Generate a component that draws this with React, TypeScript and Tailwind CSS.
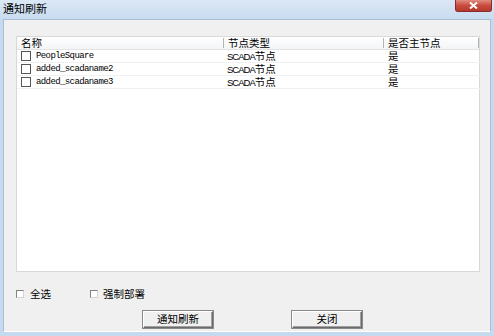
import React from "react";

type Node = {
  name: string;
  type: string;
  master: string;
};

const nodes: Node[] = [
  { name: "PeopleSquare", type: "SCADA", master: "是" },
  { name: "added_scadaname2", type: "SCADA", master: "是" },
  { name: "added_scadaname3", type: "SCADA", master: "是" },
];

const cjk = "font-['Liberation_Sans','Noto_Sans_CJK_SC',sans-serif]";

function Box({ small }: { small?: boolean }) {
  return small ? (
    <span className="block h-[8px] w-[8px] border border-t-[#808080] border-l-[#808080] border-b-[#d4d4d4] border-r-[#d4d4d4] bg-white" />
  ) : (
    <span className="block h-[10px] w-[10px] border border-[#555] bg-white" />
  );
}

function Btn({ label }: { label: string }) {
  return (
    <button className="flex h-[17px] w-[70px] items-center justify-center border border-t-white border-l-white border-b-[#6b6b6b] border-r-[#6b6b6b] bg-[#f0f0f0] text-[10.5px] leading-none text-black shadow-[inset_-1px_-1px_0_#a0a0a0,0_0_0_1px_#8a8a8a]">
      {label}
    </button>
  );
}

export default function App() {
  return (
    <div className={`flex h-[336px] w-[494px] flex-col bg-[#c5d9ef] ${cjk}`}>
      {/* title bar */}
      <div className="flex h-[19px] items-start justify-between bg-gradient-to-b from-[#dbe8f6] to-[#c9dcf0] pl-[3px] pr-[2px]">
        <span className="mt-[3px] text-[11px] leading-[12px] text-black">通知刷新</span>
        <button className="flex h-[12px] w-[37px] items-center justify-center rounded-b-[3px] border border-t-0 border-[#8a2a2a] bg-gradient-to-b from-[#e08c80] via-[#c84b3d] to-[#b53a2e] text-[10px] font-bold leading-none text-white">
          <svg width="9" height="7" viewBox="0 0 9 7">
            <path d="M1 0.5 L8 6.5 M8 0.5 L1 6.5" stroke="white" strokeWidth="2" />
          </svg>
        </button>
      </div>

      {/* body */}
      <div className="mb-[4px] ml-[3px] mr-[3px] flex flex-1 flex-col border border-[#a8bdd6] border-b-white bg-[#f0f0f0] pl-[12px] pt-[16px]">
        {/* list */}
        <div className="h-[236px] w-[464px] border border-[#d8d8d8] bg-white text-[10.5px] text-black">
          <div className="flex h-[13px] items-center border-b border-[#e3e3e3] bg-gradient-to-b from-white to-[#f3f4f6] leading-none">
            <div className="w-[206px] pl-[4px]">名称</div>
            <div className="w-[160px] border-l border-[#b5b5b5] pl-[4px]">节点类型</div>
            <div className="w-[96px] border-l border-r border-[#b5b5b5] pl-[4px]">是否主节点</div>
          </div>
          {nodes.map((n) => (
            <div
              key={n.name}
              className="flex h-[13px] w-[463px] items-center border-b border-[#f0f0f0] leading-none"
            >
              <div className="flex w-[207px] items-center gap-[5px] pl-[4px]">
                <Box />
                <span className="font-['Liberation_Mono',monospace] text-[9px] tracking-[-0.6px]">
                  {n.name}
                </span>
              </div>
              <div className="w-[160px] pl-[3px]">
                <span className="text-[9.5px] tracking-[-1px]">{n.type}</span>
                节点
              </div>
              <div className="pl-[4px]">{n.master}</div>
            </div>
          ))}
        </div>

        {/* options */}
        <div className="mt-[16px] flex h-[12px] items-center text-[10.5px] leading-none text-black">
          <Box small />
          <span className="ml-[6px]">全选</span>
          <span className="ml-[39px]">
            <Box small />
          </span>
          <span className="ml-[5px]">强制部署</span>
        </div>

        {/* buttons */}
        <div className="ml-[127px] mt-[11px] flex gap-[79px]">
          <Btn label="通知刷新" />
          <Btn label="关闭" />
        </div>
      </div>
    </div>
  );
}
